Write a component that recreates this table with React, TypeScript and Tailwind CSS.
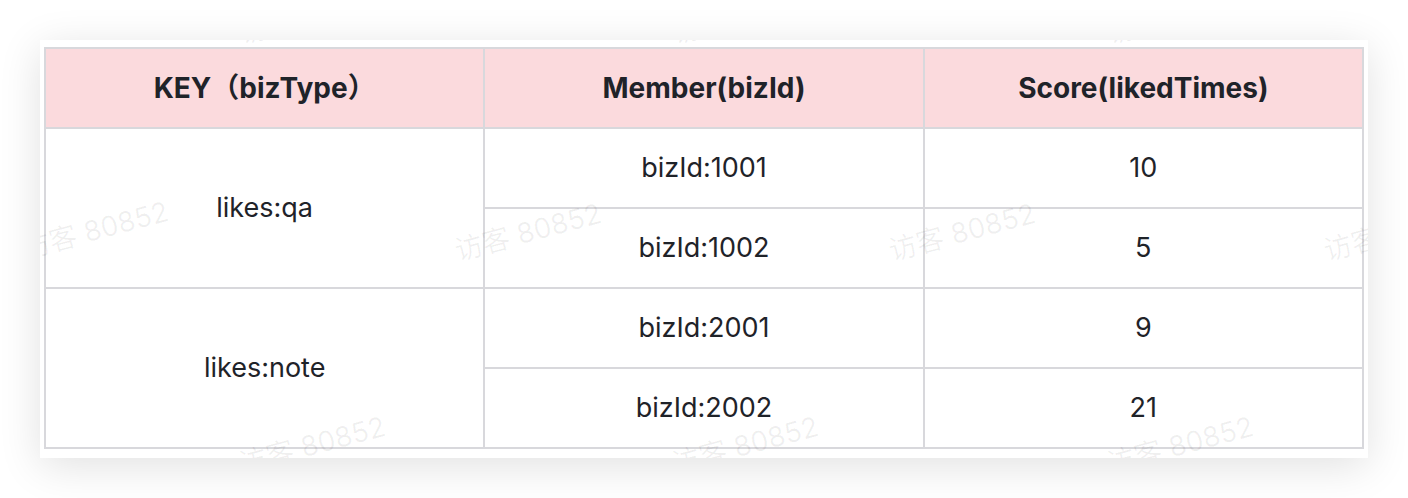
import React from "react";

const font = { fontFamily: '"Inter", "Noto Sans CJK SC", sans-serif' };

const marks = [
  "left-[272px] top-[-25px]",
  "left-[705px] top-[-25px]",
  "left-[1140px] top-[-25px]",
  "left-[55px] top-[190px]",
  "left-[488px] top-[192px]",
  "left-[922px] top-[192px]",
  "left-[1357px] top-[192px]",
  "left-[272px] top-[405px]",
  "left-[705px] top-[405px]",
  "left-[1140px] top-[405px]",
];

const th =
  "border-2 border-[#d8d8dc] bg-[#fbdadd] h-[80px] text-center align-middle font-bold text-[28px] text-[#1f2329]";
const td =
  "border-2 border-[#d8d8dc] h-[80px] text-center align-middle text-[27px] text-[#1f2329]";

export default function App() {
  return (
    <div className="w-[1408px] h-[498px] bg-white pt-[40px] pl-[40px]" style={font}>
      <div className="relative w-[1328px] h-[418px] bg-white shadow-[0_8px_40px_rgba(0,0,0,0.12)] overflow-hidden pt-[7px] px-[4px]">
        <table className="w-full table-fixed border-collapse border-2 border-[#d8d8dc]">
          <thead>
            <tr>
              <th className={th}>KEY（bizType）</th>
              <th className={th}>Member(bizId)</th>
              <th className={th}>Score(likedTimes)</th>
            </tr>
          </thead>
          <tbody>
            <tr>
              <td className={td} rowSpan={2}>likes:qa</td>
              <td className={td}>bizId:1001</td>
              <td className={td}>10</td>
            </tr>
            <tr>
              <td className={td}>bizId:1002</td>
              <td className={td}>5</td>
            </tr>
            <tr>
              <td className={td} rowSpan={2}>likes:note</td>
              <td className={td}>bizId:2001</td>
              <td className={td}>9</td>
            </tr>
            <tr>
              <td className={td}>bizId:2002</td>
              <td className={td}>21</td>
            </tr>
          </tbody>
        </table>
        {marks.map((m, i) => (
          <div
            key={i}
            className={`pointer-events-none absolute ${m} -translate-x-1/2 -translate-y-1/2 -rotate-[15deg] whitespace-nowrap text-[28px] text-[rgba(0,0,0,0.06)]`}
          >
            访客 80852
          </div>
        ))}
      </div>
    </div>
  );
}
